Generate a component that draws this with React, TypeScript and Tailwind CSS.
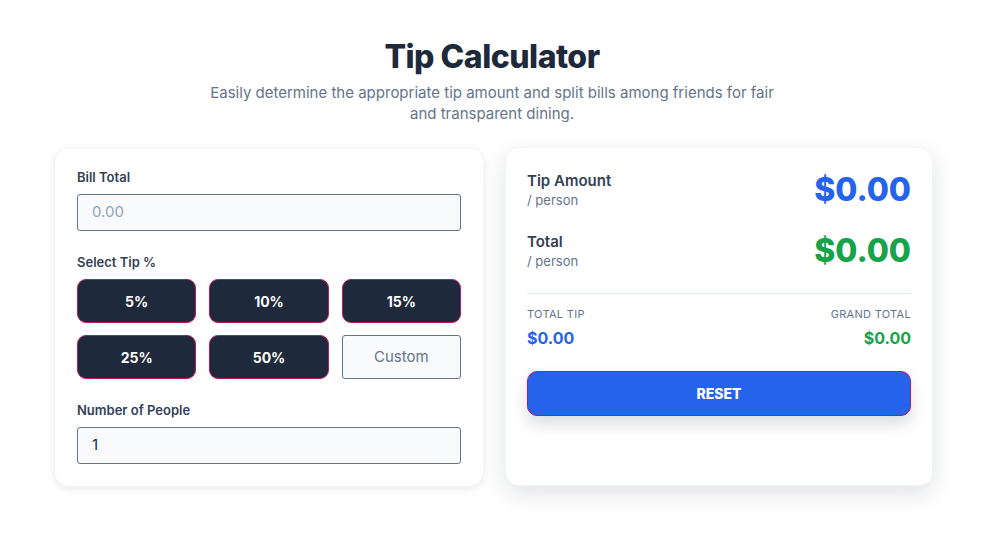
import React from "react";

const tips = ["5%", "10%", "15%", "25%", "50%"];

export default function App() {
  return (
    <div
      className="min-h-screen bg-white text-slate-800"
      style={{ fontFamily: "Inter, 'Noto Sans', sans-serif" }}
    >
      <div className="flex flex-col items-center pt-[38px]">
        <h1 className="text-[32px] leading-[38px] font-extrabold text-[#1e293b] tracking-[-0.5px]">
          Tip Calculator
        </h1>
        <p className="mt-[6px] max-w-[590px] text-center text-[15px] leading-[21px] text-[#64748b]">
          Easily determine the appropriate tip amount and split bills among friends for fair and
          transparent dining.
        </p>
      </div>

      <div className="ml-[55px] mt-[23px] grid w-[878px] grid-cols-2 gap-[22px] items-stretch">
        {/* Left card */}
        <div className="mt-[2px] rounded-[14px] bg-white px-[22px] pt-[20px] pb-[22px] shadow-[0_2px_10px_rgba(15,23,42,0.10)]">
          <label className="block text-[13px] leading-[16px] font-semibold text-[#334155]">
            Bill Total
          </label>
          <div className="mt-[9px] flex h-[37px] items-center rounded-[3px] border border-[#64748b] bg-[#f8fafc] px-[14px] text-[15px] text-[#94a3b8]">
            0.00
          </div>

          <label className="mt-[23px] block text-[13px] leading-[16px] font-semibold text-[#334155]">
            Select Tip %
          </label>
          <div className="mt-[9px] grid grid-cols-3 gap-x-[13px] gap-y-[12px]">
            {tips.map((t) => (
              <button
                key={t}
                className="flex h-[44px] items-center justify-center rounded-[9px] border border-[#be185d] bg-[#1e293b] text-[14px] font-bold text-white"
              >
                {t}
              </button>
            ))}
            <div className="flex h-[44px] items-center justify-center rounded-[3px] border border-[#64748b] bg-[#f8fafc] text-[15px] text-[#64748b]">
              Custom
            </div>
          </div>

          <label className="mt-[23px] block text-[13px] leading-[16px] font-semibold text-[#334155]">
            Number of People
          </label>
          <div className="mt-[9px] flex h-[37px] items-center rounded-[3px] border border-[#64748b] bg-[#f8fafc] px-[14px] text-[15px] text-[#1e293b]">
            1
          </div>
        </div>

        {/* Right card */}
        <div className="rounded-[14px] border border-[#f1f5f9] bg-white px-[21px] pt-[22px] pb-[20px] shadow-[0_8px_24px_rgba(15,23,42,0.12)]">
          <div className="flex items-center justify-between">
            <div>
              <div className="text-[15px] leading-[20px] font-semibold text-[#334155]">Tip Amount</div>
              <div className="text-[13px] leading-[18px] text-[#64748b]">/ person</div>
            </div>
            <div className="text-[32px] leading-[40px] font-extrabold text-[#2563eb]">$0.00</div>
          </div>
          <div className="mt-[21px] flex items-center justify-between">
            <div>
              <div className="text-[15px] leading-[20px] font-semibold text-[#334155]">Total</div>
              <div className="text-[13px] leading-[18px] text-[#64748b]">/ person</div>
            </div>
            <div className="text-[32px] leading-[40px] font-extrabold text-[#16a34a]">$0.00</div>
          </div>

          <div className="mt-[22px] h-px bg-[#e2e8f0]" />

          <div className="mt-[13px] flex justify-between">
            <div>
              <div className="text-[11px] leading-[14px] tracking-[0.3px] uppercase text-[#64748b]">Total Tip</div>
              <div className="mt-[7px] text-[16px] leading-[20px] font-bold text-[#2563eb]">$0.00</div>
            </div>
            <div className="text-right">
              <div className="text-[11px] leading-[14px] tracking-[0.3px] uppercase text-[#64748b]">Grand Total</div>
              <div className="mt-[7px] text-[16px] leading-[20px] font-bold text-[#16a34a]">$0.00</div>
            </div>
          </div>

          <button className="mt-[23px] flex h-[45px] w-full items-center justify-center rounded-[10px] border border-[#be185d] bg-[#2563eb] text-[14px] font-extrabold text-white shadow-[0_8px_16px_rgba(15,23,42,0.15)]">
            RESET
          </button>
        </div>
      </div>
    </div>
  );
}
